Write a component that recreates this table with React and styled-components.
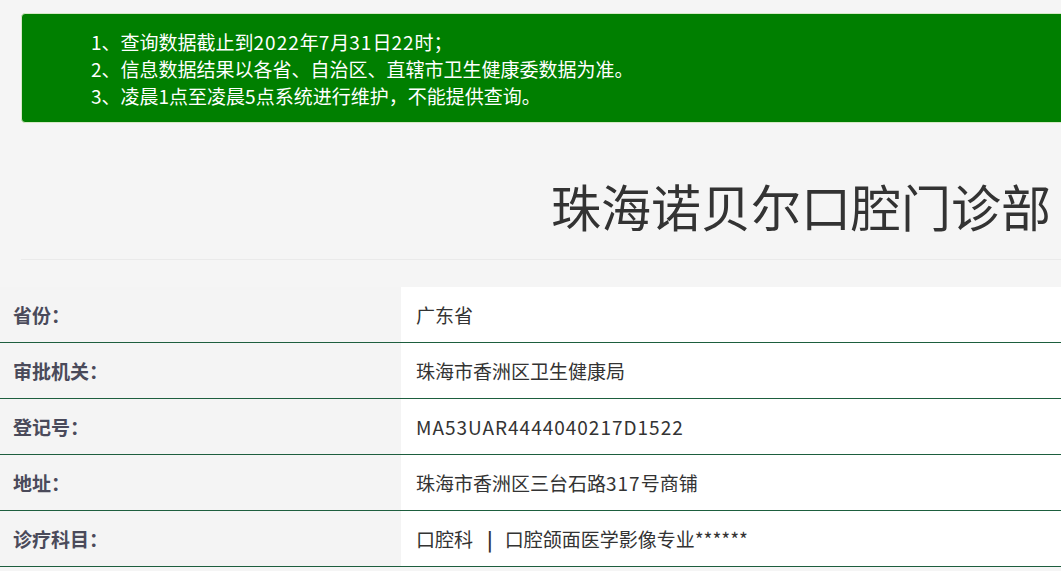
import React from "react";
import styled, { createGlobalStyle } from "styled-components";

const Global = createGlobalStyle`
  html, body {
    margin: 0;
    padding: 0;
    background: #f5f5f5;
    overflow: hidden;
    font-family: "Noto Sans CJK SC", "Noto Sans", sans-serif;
  }
`;

const Page = styled.div`
  width: 1061px;
  display: flex;
  flex-direction: column;
`;

const Notice = styled.div`
  margin: 13px -20px 0 21px;
  background: #007f00;
  border: 1px solid #d6e9c6;
  border-radius: 4px;
  padding: 14px 0 13px 69px;
  color: #ffffff;
  font-size: 19px;
  line-height: 27px;
`;

const NoticeLine = styled.div`
  white-space: nowrap;
`;

const Num = styled.span`
  letter-spacing: ${(p) => p.$ls || 1}px;
`;

const Header = styled.div`
  margin: 52px 0 0 21px;
  padding-bottom: 24px;
  border-bottom: 1px solid #eaeaea;
  display: flex;
  justify-content: flex-end;
`;

const Title = styled.h1`
  margin: 0;
  padding-right: 10px;
  font-size: 50px;
  font-weight: 400;
  line-height: 60px;
  color: #333;
`;

const Table = styled.div`
  margin-top: 27px;
  display: flex;
  flex-direction: column;
`;

const Row = styled.div`
  display: grid;
  grid-template-columns: 401px 1fr;
  height: 56px;
  border-bottom: 1px solid #1d5e3e;
  box-sizing: border-box;
`;

const Label = styled.div`
  display: flex;
  align-items: center;
  padding-left: 13px;
  background: #f4f4f4;
  font-size: 19px;
  font-weight: 700;
  color: #4a4a5a;
`;

const Value = styled.div`
  display: flex;
  align-items: center;
  padding-left: 15px;
  background: #ffffff;
  font-size: 19px;
  color: #333;
  white-space: nowrap;
`;

const Sep = styled.span`
  margin: 0 12px 0 14px;
  font-weight: 700;
`;

export default function App() {
  return (
    <Page>
      <Global />
      <Notice>
        <NoticeLine>
          1、查询数据截止到<Num>2022</Num>年<Num>7</Num>月<Num>31</Num>日<Num>22</Num>时；
        </NoticeLine>
        <NoticeLine>2、信息数据结果以各省、自治区、直辖市卫生健康委数据为准。</NoticeLine>
        <NoticeLine>3、凌晨1点至凌晨5点系统进行维护，不能提供查询。</NoticeLine>
      </Notice>
      <Header>
        <Title>珠海诺贝尔口腔门诊部</Title>
      </Header>
      <Table>
        <Row>
          <Label>省份：</Label>
          <Value>广东省</Value>
        </Row>
        <Row>
          <Label>审批机关：</Label>
          <Value>珠海市香洲区卫生健康局</Value>
        </Row>
        <Row>
          <Label>登记号：</Label>
          <Value>
            <Num>MA53UAR4444040217D1522</Num>
          </Value>
        </Row>
        <Row>
          <Label>地址：</Label>
          <Value>
            珠海市香洲区三台石路<Num>317</Num>号商铺
          </Value>
        </Row>
        <Row>
          <Label>诊疗科目：</Label>
          <Value>
            口腔科<Sep>|</Sep>口腔颌面医学影像专业******
          </Value>
        </Row>
      </Table>
    </Page>
  );
}
